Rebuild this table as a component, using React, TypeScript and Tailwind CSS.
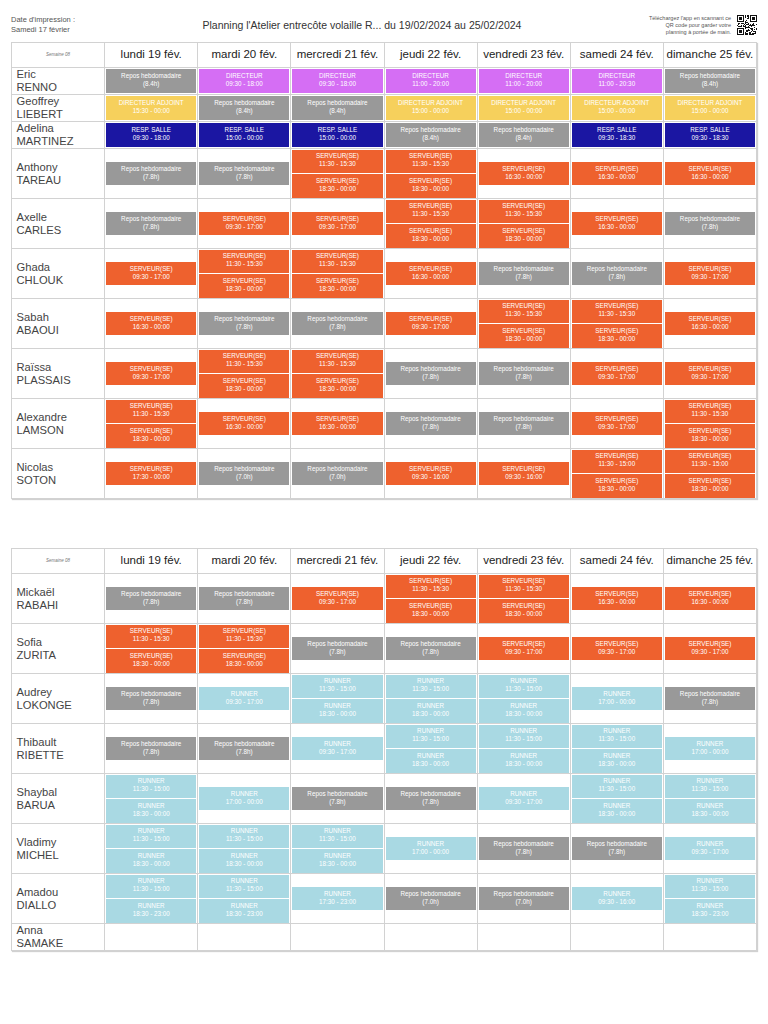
import React from "react";

type Kind = "R" | "D" | "A" | "S" | "V" | "N";
type Shift = [Kind, string, string];
type Row = { first: string; last: string; days: Shift[][] };

const rep = (h: string): Shift => ["R", "Repos hebdomadaire", `(${h}h)`];
const dir = (t: string): Shift => ["D", "DIRECTEUR", t];
const adj = (t: string): Shift => ["A", "DIRECTEUR ADJOINT", t];
const rs = (t: string): Shift => ["S", "RESP. SALLE", t];
const sv = (t: string): Shift => ["V", "SERVEUR(SE)", t];
const rn = (t: string): Shift => ["N", "RUNNER", t];

const sv2 = (a: string, b: string): Shift[] => [sv(a), sv(b)];
const rn2 = (a: string, b: string): Shift[] => [rn(a), rn(b)];

const BG: Record<Kind, string> = {
  R: "bg-[#999999]",
  D: "bg-[#d56ef4]",
  A: "bg-[#f6d05c]",
  S: "bg-[#1b16a2]",
  V: "bg-[#ee612e]",
  N: "bg-[#a9d9e3]",
};

const DAYS = [
  "lundi 19 fév.",
  "mardi 20 fév.",
  "mercredi 21 fév.",
  "jeudi 22 fév.",
  "vendredi 23 fév.",
  "samedi 24 fév.",
  "dimanche 25 fév.",
];

const TABLE1: Row[] = [
  {
    first: "Eric",
    last: "RENNO",
    days: [[rep("8.4")], [dir("09:30 - 18:00")], [dir("09:30 - 18:00")], [dir("11:00 - 20:00")], [dir("11:00 - 20:00")], [dir("11:00 - 20:30")], [rep("8.4")]],
  },
  {
    first: "Geoffrey",
    last: "LIEBERT",
    days: [[adj("15:30 - 00:00")], [rep("8.4")], [rep("8.4")], [adj("15:00 - 00:00")], [adj("15:00 - 00:00")], [adj("15:00 - 00:00")], [adj("15:00 - 00:00")]],
  },
  {
    first: "Adelina",
    last: "MARTINEZ",
    days: [[rs("09:30 - 18:00")], [rs("15:00 - 00:00")], [rs("15:00 - 00:00")], [rep("8.4")], [rep("8.4")], [rs("09:30 - 18:30")], [rs("09:30 - 18:30")]],
  },
  {
    first: "Anthony",
    last: "TAREAU",
    days: [[rep("7.8")], [rep("7.8")], sv2("11:30 - 15:30", "18:30 - 00:00"), sv2("11:30 - 15:30", "18:30 - 00:00"), [sv("16:30 - 00:00")], [sv("16:30 - 00:00")], [sv("16:30 - 00:00")]],
  },
  {
    first: "Axelle",
    last: "CARLES",
    days: [[rep("7.8")], [sv("09:30 - 17:00")], [sv("09:30 - 17:00")], sv2("11:30 - 15:30", "18:30 - 00:00"), sv2("11:30 - 15:30", "18:30 - 00:00"), [sv("16:30 - 00:00")], [rep("7.8")]],
  },
  {
    first: "Ghada",
    last: "CHLOUK",
    days: [[sv("09:30 - 17:00")], sv2("11:30 - 15:30", "18:30 - 00:00"), sv2("11:30 - 15:30", "18:30 - 00:00"), [sv("16:30 - 00:00")], [rep("7.8")], [rep("7.8")], [sv("09:30 - 17:00")]],
  },
  {
    first: "Sabah",
    last: "ABAOUI",
    days: [[sv("16:30 - 00:00")], [rep("7.8")], [rep("7.8")], [sv("09:30 - 17:00")], sv2("11:30 - 15:30", "18:30 - 00:00"), sv2("11:30 - 15:30", "18:30 - 00:00"), [sv("16:30 - 00:00")]],
  },
  {
    first: "Raïssa",
    last: "PLASSAIS",
    days: [[sv("09:30 - 17:00")], sv2("11:30 - 15:30", "18:30 - 00:00"), sv2("11:30 - 15:30", "18:30 - 00:00"), [rep("7.8")], [rep("7.8")], [sv("09:30 - 17:00")], [sv("09:30 - 17:00")]],
  },
  {
    first: "Alexandre",
    last: "LAMSON",
    days: [sv2("11:30 - 15:30", "18:30 - 00:00"), [sv("16:30 - 00:00")], [sv("16:30 - 00:00")], [rep("7.8")], [rep("7.8")], [sv("09:30 - 17:00")], sv2("11:30 - 15:30", "18:30 - 00:00")],
  },
  {
    first: "Nicolas",
    last: "SOTON",
    days: [[sv("17:30 - 00:00")], [rep("7.0")], [rep("7.0")], [sv("09:30 - 16:00")], [sv("09:30 - 16:00")], sv2("11:30 - 15:00", "18:30 - 00:00"), sv2("11:30 - 15:00", "18:30 - 00:00")],
  },
];

const TABLE2: Row[] = [
  {
    first: "Mickaël",
    last: "RABAHI",
    days: [[rep("7.8")], [rep("7.8")], [sv("09:30 - 17:00")], sv2("11:30 - 15:30", "18:30 - 00:00"), sv2("11:30 - 15:30", "18:30 - 00:00"), [sv("16:30 - 00:00")], [sv("16:30 - 00:00")]],
  },
  {
    first: "Sofia",
    last: "ZURITA",
    days: [sv2("11:30 - 15:30", "18:30 - 00:00"), sv2("11:30 - 15:30", "18:30 - 00:00"), [rep("7.8")], [rep("7.8")], [sv("09:30 - 17:00")], [sv("09:30 - 17:00")], [sv("09:30 - 17:00")]],
  },
  {
    first: "Audrey",
    last: "LOKONGE",
    days: [[rep("7.8")], [rn("09:30 - 17:00")], rn2("11:30 - 15:00", "18:30 - 00:00"), rn2("11:30 - 15:00", "18:30 - 00:00"), rn2("11:30 - 15:00", "18:30 - 00:00"), [rn("17:00 - 00:00")], [rep("7.8")]],
  },
  {
    first: "Thibault",
    last: "RIBETTE",
    days: [[rep("7.8")], [rep("7.8")], [rn("09:30 - 17:00")], rn2("11:30 - 15:00", "18:30 - 00:00"), rn2("11:30 - 15:00", "18:30 - 00:00"), rn2("11:30 - 15:00", "18:30 - 00:00"), [rn("17:00 - 00:00")]],
  },
  {
    first: "Shaybal",
    last: "BARUA",
    days: [rn2("11:30 - 15:00", "18:30 - 00:00"), [rn("17:00 - 00:00")], [rep("7.8")], [rep("7.8")], [rn("09:30 - 17:00")], rn2("11:30 - 15:00", "18:30 - 00:00"), rn2("11:30 - 15:00", "18:30 - 00:00")],
  },
  {
    first: "Vladimy",
    last: "MICHEL",
    days: [rn2("11:30 - 15:00", "18:30 - 00:00"), rn2("11:30 - 15:00", "18:30 - 00:00"), rn2("11:30 - 15:00", "18:30 - 00:00"), [rn("17:00 - 00:00")], [rep("7.8")], [rep("7.8")], [rn("09:30 - 17:00")]],
  },
  {
    first: "Amadou",
    last: "DIALLO",
    days: [rn2("11:30 - 15:00", "18:30 - 23:00"), rn2("11:30 - 15:00", "18:30 - 23:00"), [rn("17:30 - 23:00")], [rep("7.0")], [rep("7.0")], [rn("09:30 - 16:00")], rn2("11:30 - 15:00", "18:30 - 23:00")],
  },
  {
    first: "Anna",
    last: "SAMAKE",
    days: [[], [], [], [], [], [], []],
  },
];

function QR() {
  const n = 21;
  let seed = 12345;
  const rnd = () => {
    seed = (seed * 1103515245 + 12345) & 0x7fffffff;
    return seed / 0x7fffffff;
  };
  const rects: React.ReactNode[] = [];
  const finderAt = (x: number, y: number): boolean | null => {
    const corners = [
      [0, 0],
      [14, 0],
      [0, 14],
    ];
    for (const [cx, cy] of corners) {
      const dx = x - cx;
      const dy = y - cy;
      if (dx >= -1 && dx <= 7 && dy >= -1 && dy <= 7) {
        if (dx < 0 || dx > 6 || dy < 0 || dy > 6) return false;
        if (dx === 0 || dx === 6 || dy === 0 || dy === 6) return true;
        if (dx >= 2 && dx <= 4 && dy >= 2 && dy <= 4) return true;
        return false;
      }
    }
    return null;
  };
  for (let y = 0; y < n; y++) {
    for (let x = 0; x < n; x++) {
      const f = finderAt(x, y);
      const dark = f === null ? rnd() > 0.5 : f;
      if (dark) rects.push(<rect key={`${x}-${y}`} x={x} y={y} width={1} height={1} fill="#111" />);
    }
  }
  return (
    <svg width="20" height="20" viewBox="0 0 21 21" shapeRendering="crispEdges">
      {rects}
    </svg>
  );
}

function Block({ s, double }: { s: Shift; double: boolean }) {
  return (
    <div
      className={`${BG[s[0]]} ${double ? "h-[23.5px]" : "h-[24px]"} flex flex-col items-center justify-center pb-[2px] text-white text-[6.3px] leading-[8px] whitespace-nowrap`}
    >
      <div>{s[1]}</div>
      <div>{s[2]}</div>
    </div>
  );
}

function Table({ rows }: { rows: Row[] }) {
  return (
    <div className="border-t border-l border-[#d2d2d2] shadow-[1px_1px_1px_rgba(0,0,0,0.18)]">
      <div className="grid grid-cols-8 h-[25px]">
        <div className="border-r border-b border-[#d2d2d2] flex items-center justify-center text-[4.5px] italic text-[#777]">
          Semaine 08
        </div>
        {DAYS.map((d) => (
          <div
            key={d}
            className="border-r border-b border-[#d2d2d2] flex items-center justify-center text-[11.5px] text-[#222] whitespace-nowrap"
          >
            {d}
          </div>
        ))}
      </div>
      {rows.map((r) => {
        const double = r.days.some((d) => d.length > 1);
        return (
          <div key={r.first + r.last} className={`grid grid-cols-8 ${double ? "h-[50px]" : "h-[27px]"}`}>
            <div className="border-r border-b border-[#d2d2d2] flex flex-col justify-center pl-[4.5px] text-[11.2px] leading-[12.8px] text-[#444]">
              <div>{r.first}</div>
              <div>{r.last}</div>
            </div>
            {r.days.map((d, i) => (
              <div
                key={i}
                className="border-r border-b border-[#d2d2d2] flex flex-col justify-center gap-[1px] px-[1px]"
              >
                {d.map((s, j) => (
                  <Block key={j} s={s} double={double} />
                ))}
              </div>
            ))}
          </div>
        );
      })}
    </div>
  );
}

export default function App() {
  return (
    <div
      className="w-[768px] min-h-[1024px] bg-white px-[11px] pt-[13px] pb-[40px]"
      style={{ fontFamily: '"Liberation Sans", Arial, sans-serif' }}
    >
      <div className="flex items-center h-[24px]">
        <div className="text-[7.5px] leading-[10px] text-[#555] whitespace-nowrap">
          <div>Date d'impression :</div>
          <div>Samedi 17 février</div>
        </div>
        <div className="flex-1 text-center text-[10.5px] text-[#333] whitespace-nowrap pt-[2px]">
          Planning l'Atelier entrecôte volaille R... du 19/02/2024 au 25/02/2024
        </div>
        <div className="flex items-center gap-[6px]">
          <div className="text-right text-[5.5px] leading-[7px] text-[#555] whitespace-nowrap">
            <div>Téléchargez l'app en scannant ce</div>
            <div>QR code pour garder votre</div>
            <div>planning à portée de main.</div>
          </div>
          <QR />
        </div>
      </div>
      <div className="mt-[5px]">
        <Table rows={TABLE1} />
      </div>
      <div className="mt-[49px]">
        <Table rows={TABLE2} />
      </div>
    </div>
  );
}
